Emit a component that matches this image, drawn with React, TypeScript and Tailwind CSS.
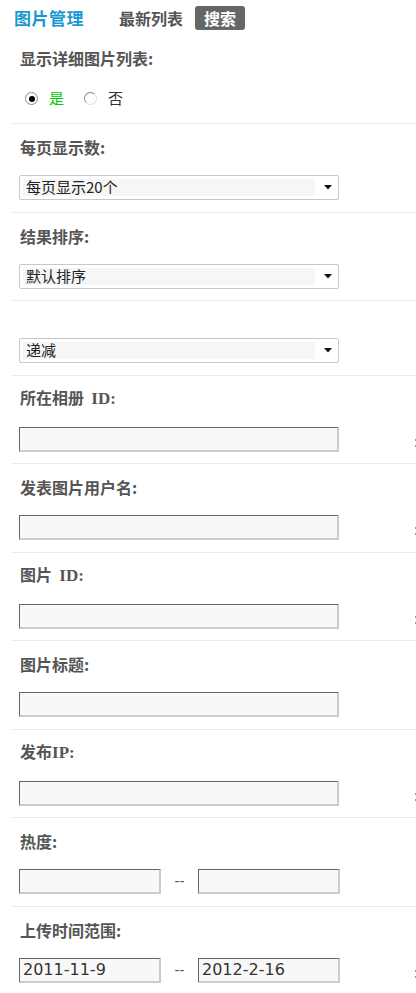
const cjk = "font-['Noto_Sans_CJK_SC','Noto_Sans',sans-serif]";

function Label({ children }: { children: React.ReactNode }) {
  return (
    <div className={`h-[22px] flex items-center pl-[7px] text-[16px] font-bold text-[#555] ${cjk}`}>
      <span>{children}</span>
    </div>
  );
}

function Id({ text }: { text: string }) {
  return <span className="font-['Liberation_Serif',serif] font-bold text-[17px] text-[#555]">{text}</span>;
}

function Select({ value }: { value: string }) {
  return (
    <div className="w-[320px] h-[25px] ml-[6px] border border-[#c8c8c8] rounded-[2px] bg-white flex items-center px-[3px]">
      <div className={`w-[292px] h-[17px] bg-[#f6f6f6] flex items-center pl-[3px] text-[15px] text-[#222] ${cjk}`}>
        {value}
      </div>
      <svg width="8" height="5" viewBox="0 0 8 5" className="ml-[9px]">
        <path d="M0 0h8L4 4.5z" fill="#111" />
      </svg>
    </div>
  );
}

function Input({ w = "w-[320px]", value = "" }: { w?: string; value?: string }) {
  return (
    <div
      className={`${w} h-[25px] border-t border-l border-b-2 border-r-2 border-t-[#666] border-l-[#666] border-b-[#ccc] border-r-[#ccc] bg-[#f8f8f8] flex items-center pl-[3px] text-[16px] text-[#333] font-['DejaVu_Sans',sans-serif]`}
    >
      {value}
    </div>
  );
}

function Edge() {
  return (
    <div className="absolute right-0 bottom-[5px] flex flex-col gap-[4px]">
      <span className="block w-[1px] h-[2px] bg-[#999]" />
      <span className="block w-[1px] h-[2px] bg-[#999]" />
    </div>
  );
}

function Row({
  label,
  children,
  first,
  edge,
}: {
  label?: React.ReactNode;
  children: React.ReactNode;
  first?: boolean;
  edge?: boolean;
}) {
  return (
    <div
      className={`${first ? "pb-[12px]" : "pb-[11.5px] border-t border-dotted border-[#c9d9e6]"} ${label ? "pt-[12px]" : "pt-[37px]"}`}
    >
      {label && <Label>{label}</Label>}
      <div className={`relative ${label ? "mt-[17px]" : ""} h-[25px] flex items-center`}>
        {children}
        {edge && <Edge />}
      </div>
    </div>
  );
}

export default function App() {
  return (
    <div className="w-[416px] min-h-[993px] bg-white overflow-hidden">
      <div className={`h-[35px] flex items-center pl-[14px] ${cjk}`}>
        <span className="text-[17px] font-bold text-[#1a98d5] tracking-[0.5px]">图片管理</span>
        <span className="ml-[35px] text-[16px] font-bold text-[#555]">最新列表</span>
        <span className="ml-[12px] h-[24px] w-[50px] flex items-center justify-center bg-[#666] rounded-[3px] text-[16px] font-bold text-white">
          搜索
        </span>
      </div>
      <div className="pl-[13px]">
        <Row label="显示详细图片列表:" first>
          <div className={`flex items-center pl-[12px] text-[15px] ${cjk}`}>
            <span className="w-[13px] h-[13px] rounded-full border border-[#8a8a8a] bg-white flex items-center justify-center">
              <span className="w-[6px] h-[6px] rounded-full bg-black" />
            </span>
            <span className="ml-[11px] text-[#00cc00]">是</span>
            <span className="ml-[20px] w-[13px] h-[13px] rounded-full border border-[#8a8a8a] border-r-[#ddd] border-b-[#ddd] bg-white" />
            <span className="ml-[11px] text-[#333]">否</span>
          </div>
        </Row>
        <Row label="每页显示数:">
          <Select value="每页显示20个" />
        </Row>
        <Row label="结果排序:">
          <Select value="默认排序" />
        </Row>
        <Row>
          <Select value="递减" />
        </Row>
        <Row label={<>所在相册&nbsp;&nbsp;<Id text="ID:" /></>} edge>
          <div className="ml-[6px]"><Input /></div>
        </Row>
        <Row label="发表图片用户名:" edge>
          <div className="ml-[6px]"><Input /></div>
        </Row>
        <Row label={<>图片&nbsp;&nbsp;<Id text="ID:" /></>} edge>
          <div className="ml-[6px]"><Input /></div>
        </Row>
        <Row label="图片标题:">
          <div className="ml-[6px]"><Input /></div>
        </Row>
        <Row label={<>发布<Id text="IP:" /></>} edge>
          <div className="ml-[6px]"><Input /></div>
        </Row>
        <Row label="热度:">
          <div className="ml-[6px] flex items-center">
            <Input w="w-[142px]" />
            <span className="w-[37px] text-center text-[14px] text-[#555] font-['DejaVu_Sans',sans-serif]">--</span>
            <Input w="w-[142px]" />
          </div>
        </Row>
        <Row label="上传时间范围:" edge>
          <div className="ml-[6px] flex items-center">
            <Input w="w-[142px]" value="2011-11-9" />
            <span className="w-[37px] text-center text-[14px] text-[#555] font-['DejaVu_Sans',sans-serif]">--</span>
            <Input w="w-[142px]" value="2012-2-16" />
          </div>
        </Row>
      </div>
    </div>
  );
}
